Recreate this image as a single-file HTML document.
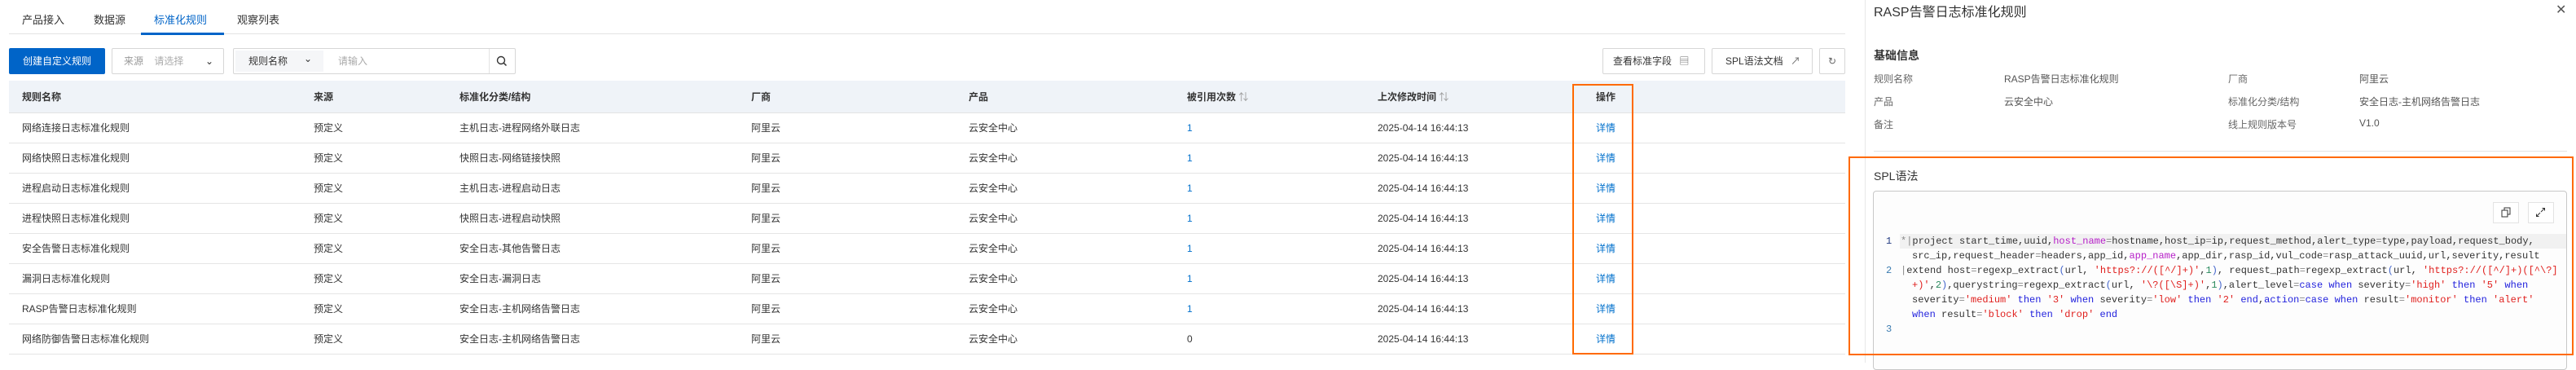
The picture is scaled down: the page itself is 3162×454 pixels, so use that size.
<!DOCTYPE html>
<html><head><meta charset="utf-8"><style>
*{box-sizing:border-box;margin:0;padding:0}
body{width:3162px;height:445px;overflow:hidden;background:#fff;font-family:"Liberation Sans","Noto Sans CJK SC",sans-serif;font-size:12px;color:#333;position:relative}
.a{position:absolute;white-space:nowrap}
.tab{top:14px;font-size:13px;color:#333}
.btn{position:absolute;border:1px solid #d7d7d7;background:#fff;border-radius:2px;height:32px;line-height:30px;font-size:12px;color:#333}
.th{position:absolute;top:99px;height:40px;left:11px;width:2254px;background:#eff3f8;border-bottom:1px solid #e3e3e3}
.row{position:absolute;left:11px;width:2254px;height:37px;border-bottom:1px solid #e5e5e5}
.c{position:absolute;top:0;line-height:36px;white-space:nowrap}
.h{font-weight:bold;line-height:40px;color:#333}
.lk{color:#0070cc}
.code{font-family:"Liberation Mono","Noto Sans CJK SC",monospace;font-size:12px;line-height:18px;color:#333}
.s{color:#e0201e}.k{color:#2222dd}.n{color:#2a8a5e}.m{color:#b620c8}.p{color:#4466cc}.g{color:#888}
</style></head><body>
<!-- tabs -->
<div class="a tab" style="left:27px">产品接入</div>
<div class="a tab" style="left:115px">数据源</div>
<div class="a tab" style="left:189px;color:#0064c8">标准化规则</div>
<div class="a tab" style="left:291px">观察列表</div>
<div class="a" style="left:11px;top:41px;width:2254px;height:1px;background:#e3e3e3"></div>
<div class="a" style="left:173px;top:40px;width:102px;height:3px;background:#0064c8"></div>
<!-- toolbar -->
<div class="a" style="left:11px;top:59px;width:118px;height:32px;background:#0064c8;border-radius:2px;color:#fff;line-height:32px;text-align:center">创建自定义规则</div>
<div class="btn" style="left:137px;top:59px;width:138px;color:#999;padding-left:14px">来源&nbsp;&nbsp;&nbsp;&nbsp;<span style="color:#aaa">请选择</span><span style="position:absolute;left:114px;top:0;color:#333">&#8964;</span></div>
<div class="btn" style="left:286px;top:59px;width:347px">
<div class="a" style="left:2px;top:2px;width:108px;height:26px;background:#f5f6f8;line-height:26px;padding-left:16px;color:#333">规则名称<span style="position:absolute;left:84px;top:-3px">&#8964;</span></div>
<div class="a" style="left:128px;top:0;color:#aaa">请输入</div>
<div class="a" style="left:313px;top:0;width:1px;height:30px;background:#e3e3e3"></div>
<svg class="a" style="left:322px;top:8px" width="14" height="14" viewBox="0 0 14 14"><circle cx="6" cy="6" r="4.5" fill="none" stroke="#333" stroke-width="1.4"/><path d="M9.3 9.3L12.5 12.5" stroke="#333" stroke-width="1.5"/></svg>
</div>
<div class="btn" style="left:1967px;top:59px;width:126px;padding-left:12px">查看标准字段 <span style="color:#666;margin-left:6px">&#9636;</span></div>
<div class="btn" style="left:2101px;top:59px;width:124px;padding-left:16px">SPL语法文档 <span style="color:#666;margin-left:6px">&#8599;</span></div>
<div class="btn" style="left:2233px;top:59px;width:32px;text-align:center;color:#666">&#8635;</div>
<!-- table -->
<div class="th">
<div class="c h" style="left:16px">规则名称</div><div class="c h" style="left:374px">来源</div><div class="c h" style="left:553px">标准化分类/结构</div><div class="c h" style="left:911px">厂商</div><div class="c h" style="left:1178px">产品</div><div class="c h" style="left:1446px">被引用次数 <span style="color:#999;font-weight:normal">⇅</span></div><div class="c h" style="left:1680px">上次修改时间 <span style="color:#999;font-weight:normal">⇅</span></div><div class="c h" style="left:1948px">操作</div>
</div>
<div id="rows"></div>
<div class="row" style="top:139px"><div class="c" style="left:16px">网络连接日志标准化规则</div><div class="c" style="left:374px">预定义</div><div class="c" style="left:553px">主机日志-进程网络外联日志</div><div class="c" style="left:911px">阿里云</div><div class="c" style="left:1178px">云安全中心</div><div class="c lk" style="left:1446px">1</div><div class="c" style="left:1680px">2025-04-14 16:44:13</div><div class="c lk" style="left:1948px">详情</div></div>
<div class="row" style="top:176px"><div class="c" style="left:16px">网络快照日志标准化规则</div><div class="c" style="left:374px">预定义</div><div class="c" style="left:553px">快照日志-网络链接快照</div><div class="c" style="left:911px">阿里云</div><div class="c" style="left:1178px">云安全中心</div><div class="c lk" style="left:1446px">1</div><div class="c" style="left:1680px">2025-04-14 16:44:13</div><div class="c lk" style="left:1948px">详情</div></div>
<div class="row" style="top:213px"><div class="c" style="left:16px">进程启动日志标准化规则</div><div class="c" style="left:374px">预定义</div><div class="c" style="left:553px">主机日志-进程启动日志</div><div class="c" style="left:911px">阿里云</div><div class="c" style="left:1178px">云安全中心</div><div class="c lk" style="left:1446px">1</div><div class="c" style="left:1680px">2025-04-14 16:44:13</div><div class="c lk" style="left:1948px">详情</div></div>
<div class="row" style="top:250px"><div class="c" style="left:16px">进程快照日志标准化规则</div><div class="c" style="left:374px">预定义</div><div class="c" style="left:553px">快照日志-进程启动快照</div><div class="c" style="left:911px">阿里云</div><div class="c" style="left:1178px">云安全中心</div><div class="c lk" style="left:1446px">1</div><div class="c" style="left:1680px">2025-04-14 16:44:13</div><div class="c lk" style="left:1948px">详情</div></div>
<div class="row" style="top:287px"><div class="c" style="left:16px">安全告警日志标准化规则</div><div class="c" style="left:374px">预定义</div><div class="c" style="left:553px">安全日志-其他告警日志</div><div class="c" style="left:911px">阿里云</div><div class="c" style="left:1178px">云安全中心</div><div class="c lk" style="left:1446px">1</div><div class="c" style="left:1680px">2025-04-14 16:44:13</div><div class="c lk" style="left:1948px">详情</div></div>
<div class="row" style="top:324px"><div class="c" style="left:16px">漏洞日志标准化规则</div><div class="c" style="left:374px">预定义</div><div class="c" style="left:553px">安全日志-漏洞日志</div><div class="c" style="left:911px">阿里云</div><div class="c" style="left:1178px">云安全中心</div><div class="c lk" style="left:1446px">1</div><div class="c" style="left:1680px">2025-04-14 16:44:13</div><div class="c lk" style="left:1948px">详情</div></div>
<div class="row" style="top:361px"><div class="c" style="left:16px">RASP告警日志标准化规则</div><div class="c" style="left:374px">预定义</div><div class="c" style="left:553px">安全日志-主机网络告警日志</div><div class="c" style="left:911px">阿里云</div><div class="c" style="left:1178px">云安全中心</div><div class="c lk" style="left:1446px">1</div><div class="c" style="left:1680px">2025-04-14 16:44:13</div><div class="c lk" style="left:1948px">详情</div></div>
<div class="row" style="top:398px"><div class="c" style="left:16px">网络防御告警日志标准化规则</div><div class="c" style="left:374px">预定义</div><div class="c" style="left:553px">安全日志-主机网络告警日志</div><div class="c" style="left:911px">阿里云</div><div class="c" style="left:1178px">云安全中心</div><div class="c" style="left:1446px">0</div><div class="c" style="left:1680px">2025-04-14 16:44:13</div><div class="c lk" style="left:1948px">详情</div></div>
<div class="a" style="left:1930px;top:103px;width:75px;height:332px;border:2px solid #ff6a00"></div>
<!-- drawer -->
<div class="a" style="left:2289px;top:0;width:873px;height:445px;background:#fff;border-left:1px solid #e8e8e8"></div>
<div class="a" style="left:2300px;top:1px;font-size:16px;color:#333">RASP告警日志标准化规则</div>
<div class="a" style="left:3137px;top:2px;font-size:16px;color:#555">✕</div>
<div class="a" style="left:2300px;top:58px;font-size:14px;font-weight:bold">基础信息</div>
<div class="a" style="left:2300px;top:88px;color:#666">规则名称</div><div class="a" style="left:2460px;top:88px;color:#555">RASP告警日志标准化规则</div><div class="a" style="left:2735px;top:88px;color:#666">厂商</div><div class="a" style="left:2896px;top:88px;color:#555">阿里云</div>
<div class="a" style="left:2300px;top:116px;color:#666">产品</div><div class="a" style="left:2460px;top:116px;color:#555">云安全中心</div><div class="a" style="left:2735px;top:116px;color:#666">标准化分类/结构</div><div class="a" style="left:2896px;top:116px;color:#555">安全日志-主机网络告警日志</div>
<div class="a" style="left:2300px;top:144px;color:#666">备注</div><div class="a" style="left:2735px;top:144px;color:#666">线上规则版本号</div><div class="a" style="left:2896px;top:144px;color:#555">V1.0</div>
<div class="a" style="left:2300px;top:185px;width:851px;height:1px;background:#e3e3e3"></div>
<div class="a" style="left:2300px;top:206px;font-size:14px">SPL语法</div>
<div class="a" style="left:2299px;top:234px;width:852px;height:220px;border:1px solid #c8c8c8;border-radius:4px;background:#fdfdfd"></div>
<div class="a" style="left:3060px;top:248px;width:32px;height:26px;border:1px solid #e3e3e3;background:#fff"></div>
<svg class="a" style="left:3070px;top:254px" width="12" height="13" viewBox="0 0 12 13"><rect x="1" y="4" width="7" height="8" fill="none" stroke="#333"/><path d="M4 4V1h7v8H8" fill="none" stroke="#333"/></svg>
<div class="a" style="left:3103px;top:248px;width:32px;height:26px;border:1px solid #e3e3e3;background:#fff"></div>
<svg class="a" style="left:3112px;top:254px" width="13" height="13" viewBox="0 0 13 13"><path d="M7 6L11.5 1.5M8.5 1.5h3v3M6 7L1.5 11.5M1.5 8.5v3h3" fill="none" stroke="#333"/></svg>
<div class="a" style="left:2332px;top:287px;width:818px;height:18px;background:#f1f1f1"></div>
<div class="a code" style="left:2315px;top:287px;color:#223a80">1</div>
<div class="a code" style="left:2315px;top:323px;color:#3b7bb0">2</div>
<div class="a code" style="left:2315px;top:395px;color:#3b7bb0">3</div>
<div class="a code" style="left:2333px;top:287px"><span class="g">*|</span>project start_time,uuid,<span class="m">host_name</span><span class="g">=</span>hostname,host_ip<span class="g">=</span>ip,request_method,alert_type<span class="g">=</span>type,payload,request_body,</div>
<div class="a code" style="left:2347px;top:305px">src_ip,request_header<span class="g">=</span>headers,app_id,<span class="m">app_name</span>,app_dir,rasp_id,vul_code<span class="g">=</span>rasp_attack_uuid,url,severity,result</div>
<div class="a code" style="left:2333px;top:323px"><span class="g">|</span>extend host<span class="g">=</span>regexp_extract<span class="p">(</span>url, <span class="s">'https?://([^/]+)'</span>,<span class="n">1</span><span class="p">)</span>, request_path<span class="g">=</span>regexp_extract<span class="p">(</span>url, <span class="s">'https?://([^/]+)([^\?]</span></div>
<div class="a code" style="left:2347px;top:341px"><span class="s">+)'</span>,<span class="n">2</span><span class="p">)</span>,querystring<span class="g">=</span>regexp_extract<span class="p">(</span>url, <span class="s">'\?([\S]+)'</span>,<span class="n">1</span><span class="p">)</span>,alert_level<span class="g">=</span><span class="k">case when</span> severity<span class="g">=</span><span class="s">'high'</span> <span class="k">then</span> <span class="s">'5'</span> <span class="k">when</span></div>
<div class="a code" style="left:2347px;top:359px">severity<span class="g">=</span><span class="s">'medium'</span> <span class="k">then</span> <span class="s">'3'</span> <span class="k">when</span> severity<span class="g">=</span><span class="s">'low'</span> <span class="k">then</span> <span class="s">'2'</span> <span class="k">end</span>,<span class="k">action</span><span class="g">=</span><span class="k">case when</span> result<span class="g">=</span><span class="s">'monitor'</span> <span class="k">then</span> <span class="s">'alert'</span></div>
<div class="a code" style="left:2347px;top:377px"><span class="k">when</span> result<span class="g">=</span><span class="s">'block'</span> <span class="k">then</span> <span class="s">'drop'</span> <span class="k">end</span></div>
<div class="a" style="left:2269px;top:192px;width:890px;height:244px;border:2px solid #ff6a00"></div>
</body></html>
